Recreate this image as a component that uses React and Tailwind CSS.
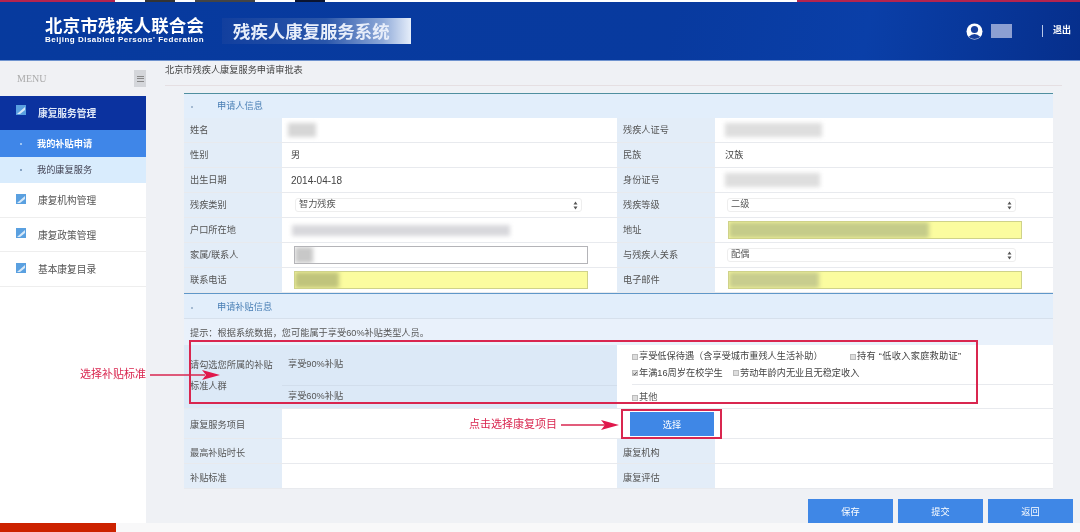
import React from 'react';

const menuIcon = (
  <svg width="12" height="12" viewBox="0 0 12 12">
    <rect x="1" y="1" width="10" height="10" fill="#5aa0e0" />
    <path d="M2 10 L10 3 L10 6 L5 10 Z" fill="#d6e8f8" />
  </svg>
);

// 表格里的打码块
const Blur = ({ className }) => <div className={`blur-[2px] ${className}`} />;

const Label = ({ children, pad = 'pt-[2px]' }) => (
  <div className={`flex items-center bg-[#e3edf8] pl-[6px] text-[#555] ${pad}`}>{children}</div>
);

const Value = ({ children, className = '' }) => (
  <div className={`flex items-center ${className}`}>{children}</div>
);

const Row = ({ children, className = 'h-[25px]' }) => (
  <div className={`grid grid-cols-[98px_335px_98px_1fr] border-b border-[#e8eaee] ${className}`}>{children}</div>
);

const FakeSelect = ({ text, className }) => (
  <div className={`flex h-[14px] items-center justify-between rounded-[3px] border border-[#eeeeee] bg-white pl-[3px] pr-[3px] text-[#555] ${className}`}>
    <span>{text}</span>
    <svg width="5" height="9" viewBox="0 0 5 9">
      <path d="M2.5 0.5 L4.5 3.5 H0.5 Z M2.5 8.5 L4.5 5.5 H0.5 Z" fill="#555" />
    </svg>
  </div>
);

const YellowInput = ({ blurClass }) => (
  <div className="h-[18px] w-[294px] overflow-hidden border border-[#cfd28a] bg-[#fbfc9f]">
    <Blur className={`h-full ${blurClass}`} />
  </div>
);

const Check = ({ checked }) => (
  <span className="mr-[1px] inline-flex h-[6px] w-[6px] items-center justify-center border border-[#bbb] bg-[#ddd]">
    {checked && (
      <svg width="7" height="7" viewBox="0 0 7 7">
        <path d="M0.5 3.5 L2.8 6 L6.5 1" stroke="#333" strokeWidth="1.4" fill="none" />
      </svg>
    )}
  </span>
);

const SectionHead = ({ title, className }) => (
  <div className={`flex items-center bg-[#e2eefb] ${className}`}>
    <span className="ml-[7px] h-[2px] w-[2px] rounded-full bg-[#8fa9c4]" />
    <span className="ml-[24px] text-[#4a7fb5]">{title}</span>
  </div>
);

const SideItem = ({ text }) => (
  <div className="flex h-[34.5px] items-center border-b border-[#eeeeee] bg-white pl-[15px] text-[9.7px] text-[#555]">
    <span className="-mt-[2px]">{menuIcon}</span>
    <span className="ml-[11px] mt-[4px]">{text}</span>
  </div>
);

const ActionBtn = ({ text }) => (
  <div className="flex h-[24px] w-[85px] items-center justify-center bg-[#3f87e6] pt-[4px] text-white">{text}</div>
);

export default function App() {
  return (
    <div className="relative flex h-[532px] w-[1080px] flex-col overflow-hidden bg-[#f8f8f9] text-[9.2px] blur-[0.35px] [font-family:'Liberation_Sans','Noto_Sans_CJK_SC',sans-serif]">
      {/* 顶部被截断的一条 */}
      <div className="flex h-[2px] bg-white">
        <div className="w-[115px] bg-[#b4244f]" />
        <div className="ml-[30px] w-[30px] bg-[#333]" />
        <div className="ml-[20px] w-[60px] bg-[#444]" />
        <div className="ml-[40px] w-[30px] bg-[#0b1430]" />
        <div className="ml-auto w-[283px] bg-[#b4244f]" />
      </div>

      {/* Header */}
      <header className="flex h-[59px] items-center border-b border-[#6f93cf] bg-[linear-gradient(100deg,#073a9e_0%,#083a9f_62%,#0a3fa8_80%,#062f8c_100%)] pl-[45px] pr-[9px] text-white">
        <div className="w-[177px]">
          <div className="h-[17px] text-[17.4px] font-bold leading-[17px] tracking-[0.3px]">北京市残疾人联合会</div>
          <div className="mt-[1px] h-[8px] whitespace-nowrap text-[8px] font-bold leading-[8px] tracking-[0.5px]">Beijing Disabled Persons' Federation</div>
        </div>
        <div className="flex h-[26px] w-[189px] items-center bg-[linear-gradient(90deg,#123f9e_0%,#2a56aa_55%,#8ea9d8_85%,#e6eefa_100%)] pl-[11px] pt-[2px] text-[17.4px] font-bold text-[#e8eefa]">
          残疾人康复服务系统
        </div>
        <svg className="ml-auto" width="17" height="19" viewBox="0 0 17 19">
          <circle cx="8.5" cy="9.5" r="8" fill="#fff" />
          <circle cx="8.5" cy="7.5" r="3.6" fill="#173f9c" />
          <path d="M2.5 15 Q8.5 9 14.5 15 Q8.5 19 2.5 15 Z" fill="#173f9c" />
        </svg>
        <div className="ml-[8px] h-[14px] w-[21px] bg-[#8c9fd2] blur-[0.6px]" />
        <div className="ml-[30px] h-[12px] w-px bg-[#b8c8e8]" />
        <span className="ml-[10px] text-[9px] font-bold">退出</span>
      </header>

      <div className="flex h-[462px]">
        {/* Sidebar */}
        <aside className="w-[146px] shrink-0 bg-white">
          <div className="flex h-[35px] items-center justify-between bg-[#f0f1f4] pl-[17px]">
            <span className="text-[10px] text-[#aaa] [font-family:'Liberation_Serif',serif]">MENU</span>
            <span className="flex h-[17px] w-[12px] flex-col items-center justify-center gap-[1.5px] bg-[#d4d6da]">
              <i className="h-px w-[7px] bg-[#888]" />
              <i className="h-px w-[7px] bg-[#888]" />
              <i className="h-px w-[7px] bg-[#888]" />
            </span>
          </div>
          <div className="flex h-[34px] items-center bg-[#0b329f] pl-[15px] text-[9.7px] font-bold text-[#dfe8f8]">
            <span className="-mt-[6px]">{menuIcon}</span>
            <span className="ml-[11px] mt-[2px]">康复服务管理</span>
          </div>
          <div className="flex h-[27px] items-center bg-[#3f86e8] pl-[20px] font-bold text-white">
            <span className="h-[2px] w-[2px] rounded-full bg-[#bcd8f8]" />
            <span className="ml-[15px] mt-[2px]">我的补贴申请</span>
          </div>
          <div className="flex h-[26px] items-center bg-[#d9ecfd] pl-[20px] text-[#445]">
            <span className="h-[2px] w-[2px] rounded-full bg-[#6c8db0]" />
            <span className="ml-[15px] mt-[2px]">我的康复服务</span>
          </div>
          <SideItem text="康复机构管理" />
          <SideItem text="康复政策管理" />
          <SideItem text="基本康复目录" />
        </aside>

        {/* Main */}
        <main className="flex-1 bg-[#eff1f5] pl-[1px]">
          <div className="ml-[18px] mr-[18px] flex h-[25px] items-center border-b border-[#e5dfe2] pb-[4px] text-[#444]">
            北京市残疾人康复服务申请审批表
          </div>

          <div className="ml-[37px] mt-[7px] w-[869px] border-t border-[#4f8f9f] bg-white text-[#444]">
            <SectionHead title="申请人信息" className="h-[24px] pt-[2px]" />
            <Row>
              <Label>姓名</Label>
              <Value className="pl-[6px]"><Blur className="h-[14px] w-[28px] bg-[#d6d6d6]" /></Value>
              <Label>残疾人证号</Label>
              <Value className="pl-[10px]"><Blur className="h-[14px] w-[97px] bg-[#dedede]" /></Value>
            </Row>
            <Row>
              <Label>性别</Label>
              <Value className="pl-[9px] pt-[2px]">男</Value>
              <Label>民族</Label>
              <Value className="pl-[10px] pt-[2px]">汉族</Value>
            </Row>
            <Row>
              <Label>出生日期</Label>
              <Value className="pl-[9px] text-[10px]">2014-04-18</Value>
              <Label>身份证号</Label>
              <Value className="pl-[10px]"><Blur className="h-[14px] w-[95px] bg-[#dedede]" /></Value>
            </Row>
            <Row>
              <Label>残疾类别</Label>
              <Value className="pl-[13px]"><FakeSelect text="智力残疾" className="w-[287px]" /></Value>
              <Label>残疾等级</Label>
              <Value className="pl-[12px]"><FakeSelect text="二级" className="w-[289px]" /></Value>
            </Row>
            <Row>
              <Label>户口所在地</Label>
              <Value className="pl-[10px]"><Blur className="h-[11px] w-[218px] bg-[#d8d8dc]" /></Value>
              <Label>地址</Label>
              <Value className="pl-[13px]"><YellowInput blurClass="w-[200px] bg-[#c5cc8a]" /></Value>
            </Row>
            <Row>
              <Label>家属/联系人</Label>
              <Value className="pl-[12px]">
                <div className="h-[18px] w-[294px] overflow-hidden border border-[#b4b4b8] bg-white">
                  <Blur className="h-full w-[18px] bg-[#c8c8c8]" />
                </div>
              </Value>
              <Label>与残疾人关系</Label>
              <Value className="pl-[12px]"><FakeSelect text="配偶" className="w-[289px]" /></Value>
            </Row>
            <Row>
              <Label>联系电话</Label>
              <Value className="pl-[12px]"><YellowInput blurClass="w-[44px] bg-[#c0c47c]" /></Value>
              <Label>电子邮件</Label>
              <Value className="pl-[13px]"><YellowInput blurClass="w-[90px] bg-[#c8cd8e]" /></Value>
            </Row>

            <div className="h-px bg-[#5f97c9]" />
            <SectionHead title="申请补贴信息" className="h-[25px] border-b border-[#d6e0ec] pt-[4px]" />
            <div className="flex h-[26px] items-center bg-[#e9f1fb] pl-[6px] pt-[4px] text-[#555]">
              提示：根据系统数据，您可能属于享受60%补贴类型人员。
            </div>

            {/* 补贴标准 */}
            <div className="grid h-[63px] grid-cols-[98px_335px_1fr]">
              <div className="bg-[#dce9f7] pl-[6px] pt-[10px] leading-[20px] text-[#555]">
                <div>请勾选您所属的补贴</div>
                <div className="mt-[1px]">标准人群</div>
              </div>
              <div className="flex flex-col bg-[#dce9f7] text-[#555]">
                <div className="flex h-[40px] items-center pl-[6px]">享受90%补贴</div>
                <div className="flex flex-1 items-center border-t border-[#d2deec] pl-[6px]">享受60%补贴</div>
              </div>
              <div className="flex flex-col pl-[15px]">
                <div className="flex h-[40px] flex-col justify-center gap-[3px] border-b border-[#e8eaee] pt-[1px]">
                  <div className="flex items-center">
                    <Check />
                    <span className="w-[211px]">享受低保待遇（含享受城市重残人生活补助）</span>
                    <Check />
                    <span className="tracking-[0.3px]">持有 “低收入家庭救助证”</span>
                  </div>
                  <div className="flex items-center">
                    <Check checked />
                    <span className="w-[94px]">年满16周岁在校学生</span>
                    <Check />
                    <span>劳动年龄内无业且无稳定收入</span>
                  </div>
                </div>
                <div className="flex flex-1 items-center pt-[2px] text-[#555]">
                  <Check />
                  <span>其他</span>
                </div>
              </div>
            </div>

            <div className="grid h-[31px] grid-cols-[98px_335px_1fr] border-y border-[#e8eaee]">
              <Label pad="pt-[4px]">康复服务项目</Label>
              <div />
              <div className="flex items-center pl-[13px]">
                <div className="flex h-[24px] w-[84px] items-center justify-center bg-[#3f87e6] pt-[4px] text-white">选择</div>
              </div>
            </div>
            <Row>
              <Label pad="pt-[6px]">最高补贴时长</Label>
              <div />
              <Label pad="pt-[6px]">康复机构</Label>
              <div />
            </Row>
            <Row>
              <Label pad="pt-[6px]">补贴标准</Label>
              <div />
              <Label pad="pt-[6px]">康复评估</Label>
              <div />
            </Row>
          </div>

          <div className="mt-[10px] flex justify-end gap-[5px] pr-[7px]">
            <ActionBtn text="保存" />
            <ActionBtn text="提交" />
            <ActionBtn text="返回" />
          </div>
        </main>
      </div>

      <div className="flex-1">
        <div className="h-full w-[116px] bg-[#cc2200]" />
      </div>

      {/* 红色标注 */}
      <div className="absolute left-[189px] top-[340px] h-[64px] w-[789px] border-2 border-[#d9264f]" />
      <div className="absolute left-[621px] top-[409px] h-[30px] w-[101px] border-2 border-[#d9264f]" />
      <span className="absolute left-[80px] top-[367px] text-[11px] leading-[14px] text-[#d9264f]">选择补贴标准</span>
      <svg className="absolute left-[149px] top-[369px]" width="72" height="12" viewBox="0 0 72 12">
        <path d="M1 6 H56" stroke="#d9264f" strokeWidth="1.5" />
        <path d="M53 1 L71 6 L53 11 L57 6 Z" fill="#e0184c" />
      </svg>
      <span className="absolute left-[469px] top-[417px] text-[11px] leading-[14px] text-[#d9264f]">点击选择康复项目</span>
      <svg className="absolute left-[560px] top-[419px]" width="60" height="12" viewBox="0 0 60 12">
        <path d="M1 6 H46" stroke="#d9264f" strokeWidth="1.5" />
        <path d="M41 1 L59 6 L41 11 L45 6 Z" fill="#e0184c" />
      </svg>
    </div>
  );
}
